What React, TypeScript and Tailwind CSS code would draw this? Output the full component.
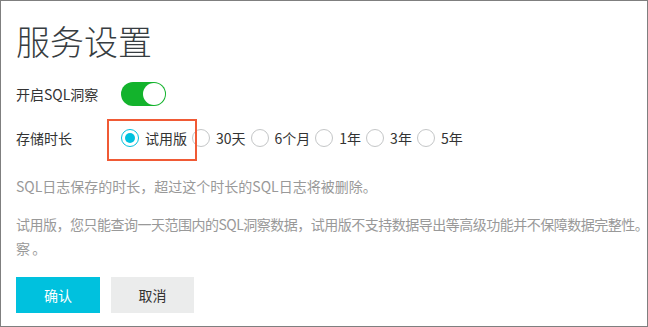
import { FC } from 'react';

const options = ['试用版', '30天', '6个月', '1年', '3年', '5年'];

const Radio: FC<{ checked?: boolean }> = ({ checked }) => (
  <span
    className={
      checked
        ? 'flex h-[18px] w-[18px] shrink-0 items-center justify-center rounded-full border border-[#00c1de] bg-white'
        : 'flex h-[18px] w-[18px] shrink-0 items-center justify-center rounded-full border border-[#c4c6c7] bg-white'
    }
  >
    {checked && <span className="h-[10px] w-[10px] rounded-full bg-[#00c1de]" />}
  </span>
);

const App: FC = () => {
  return (
    <div
      className="box-border h-[327px] w-[648px] overflow-hidden border border-[#7f7f7f] bg-white px-[15px] pt-[20px] text-[#333]"
      style={{ fontFamily: '"Noto Sans CJK SC", sans-serif' }}
    >
      <h1 className="text-[34px] font-light leading-[40px] text-[#373d41]">服务设置</h1>

      <div className="mt-[21px] flex h-[24px] items-center text-[14px]">
        <span className="w-[105px] shrink-0">开启SQL洞察</span>
        <span className="flex h-[24px] w-[45px] items-center justify-end rounded-full bg-[#13b32c] p-[1px]">
          <span className="h-[22px] w-[22px] rounded-full bg-white" />
        </span>
      </div>

      <div className="mt-[20px] flex h-[24px] items-center text-[14px]">
        <span className="w-[105px] shrink-0">存储时长</span>
        <div className="relative flex items-center">
          {options.map((o, i) => (
            <label key={o} className="mr-[5px] flex items-center">
              <Radio checked={i === 0} />
              <span className="ml-[6px] whitespace-nowrap">{o}</span>
            </label>
          ))}
          <span className="pointer-events-none absolute left-[-14px] top-[-9px] h-[42px] w-[90px] border-2 border-[#f05a35]" />
        </div>
      </div>

      <p className="mt-[24px] text-[14px] leading-[24px] text-[#999]">
        SQL日志保存的时长，超过这个时长的SQL日志将被删除。
      </p>

      <p className="mt-[14px] whitespace-nowrap text-[14px] leading-[24px] tracking-[-0.5px] text-[#999]">
        试用版，您只能查询一天范围内的SQL洞察数据，试用版不支持数据导出等高级功能并不保障数据完整性。
        <br />察 。
      </p>

      <div className="mt-[17px] flex gap-[11px] text-[14px]">
        <button className="h-[36px] w-[84px] bg-[#00c1de] text-white">确认</button>
        <button className="h-[36px] w-[83px] bg-[#ebecec] text-[#333]">取消</button>
      </div>
    </div>
  );
};

export default App;
